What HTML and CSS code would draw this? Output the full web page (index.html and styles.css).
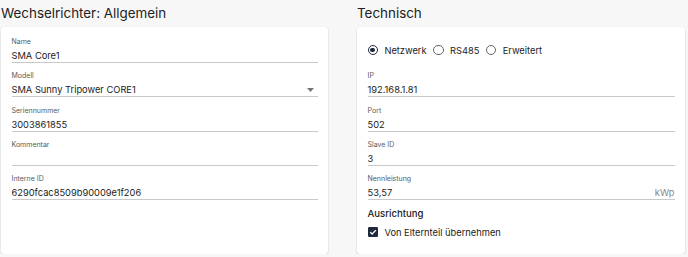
FILE: index.html
```html
<!DOCTYPE html>
<html lang="de">
<head>
  <meta charset="UTF-8" />
  <meta name="viewport" content="width=device-width,initial-scale=1" />
  <title>Wechselrichter</title>
  <link rel="stylesheet" href="styles.css">
</head>
<body>
  <div class="cols">
    <section>
      <h2>Wechselrichter: Allgemein</h2>
      <div class="card">
        <div class="field"><label>Name</label><div class="val">SMA Core1</div></div>
        <div class="field"><label>Modell</label>
          <div class="val select">SMA Sunny Tripower CORE1
            <svg class="caret" width="7" height="4" viewBox="0 0 7 4"><path d="M0 0h7L3.5 4z" fill="#757575"/></svg>
          </div>
        </div>
        <div class="field"><label>Seriennummer</label><div class="val">3003861855</div></div>
        <div class="field"><label>Kommentar</label><div class="val"></div></div>
        <div class="field"><label>Interne ID</label><div class="val">6290fcac8509b90009e1f206</div></div>
      </div>
    </section>

    <section>
      <h2>Technisch</h2>
      <div class="card">
        <div class="radios">
          <span class="radio on"><i></i>Netzwerk</span>
          <span class="radio"><i></i>RS485</span>
          <span class="radio"><i></i>Erweitert</span>
        </div>
        <div class="field"><label>IP</label><div class="val">192.168.1.81</div></div>
        <div class="field"><label>Port</label><div class="val">502</div></div>
        <div class="field"><label>Slave ID</label><div class="val">3</div></div>
        <div class="field"><label>Nennleistung</label><div class="val">53,57<span class="unit">kWp</span></div></div>
        <div class="sub">Ausrichtung</div>
        <div class="check">
          <svg width="10" height="10" viewBox="0 0 10 10"><rect width="10" height="10" rx="1.2" fill="#1e293b"/><path d="M2.2 5.1l1.9 1.9 3.8-3.9" fill="none" stroke="#fff" stroke-width="1.3"/></svg>
          Von Elternteil übernehmen
        </div>
      </div>
    </section>
  </div>
</body>
</html>
```

FILE: styles.css
```css
body{margin:0;background:#f7f7f7;color:#1c1c1c;font-family:Inter,"Noto Sans",sans-serif}
.cols{display:grid;grid-template-columns:327px 328px;gap:29px;padding:0 3px 0 1px}
h2{margin:0;padding:3px 0 4px;font-size:13.4px;line-height:20px;font-weight:400;color:#222}
.card{background:#fff;height:227px;box-sizing:border-box;padding:10px 10.5px 0;border-radius:3px;
      box-shadow:0 1px 2px rgba(0,0,0,.18),0 0 1px rgba(0,0,0,.08)}
.field{margin-bottom:8.3px;border-bottom:1px solid #c9c9c9}
.field label{display:block;font-size:7px;line-height:10px;color:#5a5a5a}
.val{font-size:9.3px;height:15px;box-sizing:border-box;padding-top:2px;display:flex;align-items:center}
.select .caret{margin-left:auto;margin-right:4px}
.unit{margin-left:auto;color:#888}
.radios{display:flex;align-items:center;gap:6.5px;height:26px;margin-bottom:8.3px;font-size:9.3px}
.radio{display:flex;align-items:center;gap:6.5px}
.radio i{width:8.4px;height:8.4px;border:1.1px solid #666;border-radius:50%;display:flex;align-items:center;justify-content:center}
.radio.on i{border-color:#1e293b}
.radio.on i::after{content:"";width:4.6px;height:4.6px;border-radius:50%;background:#1e293b}
.sub{font-size:9.6px;font-weight:500;margin-top:-2px;line-height:15px}
.check{display:flex;align-items:center;gap:7px;font-size:9.3px;margin-top:2px;height:18px}
```
